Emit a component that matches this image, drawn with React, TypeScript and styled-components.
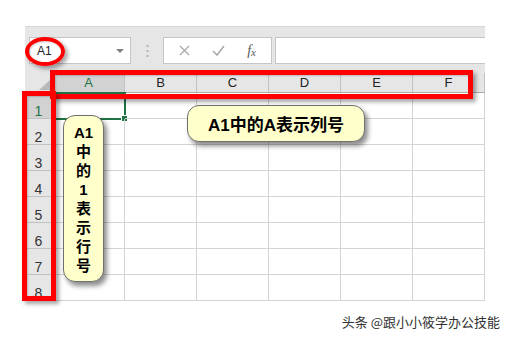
import React from "react";
import styled, {createGlobalStyle} from "styled-components";

const GlobalStyle = createGlobalStyle`
    html, body{
        margin: 0;
        padding: 0;
        background: #fff;
    }
    body{
        font-family: "Liberation Sans", "Noto Sans CJK SC", sans-serif;
    }
`

const Stage = styled.div`
    position: relative;
    width: 511px;
    height: 345px;
    overflow: hidden;
    box-sizing: border-box;
    padding: 26px 0 0 25px;
`

const Sheet = styled.div`
    width: 460px;
    background: #e6e6e6;
    border-top: 1px solid #d6d6d6;
`

const FormulaBar = styled.div`
    height: 37px;
    box-sizing: border-box;
    padding: 10px 0 0 4px;
    display: flex;
    align-items: stretch;
`

const NameBox = styled.div`
    width: 102px;
    box-sizing: border-box;
    background: #fff;
    border: 1px solid #c6c6c6;
    display: flex;
    align-items: center;
    justify-content: space-between;
    padding: 0 6px 0 7px;
    font-size: 12px;
    color: #222;
`

const Caret = styled.span`
    width: 0;
    height: 0;
    border-left: 4px solid transparent;
    border-right: 4px solid transparent;
    border-top: 4px solid #808080;
`

const Grip = styled.div`
    width: 32px;
    display: flex;
    align-items: center;
    justify-content: center;
`

const ActionBox = styled.div`
    width: 109px;
    box-sizing: border-box;
    background: #fff;
    border: 1px solid #c6c6c6;
    display: flex;
    align-items: center;
    justify-content: space-around;
    padding: 0 4px;
`

const Fx = styled.span`
    font-family: "Liberation Serif", serif;
    font-style: italic;
    font-size: 14px;
    color: #555;
    sub{
        font-size: 11px;
        vertical-align: -1px;
    }
`

const FormulaInput = styled.div`
    flex: 1;
    margin-left: 3px;
    background: #fff;
    border: 1px solid #c6c6c6;
    border-right: none;
`

const Gap = styled.div`
    height: 9px;
`

const Grid = styled.div`
    display: grid;
    grid-template-columns: 28px repeat(6, 72px);
    grid-template-rows: 20px repeat(8, 26px);
    background: #fff;
`

const Cell = styled.div`
    position: relative;
    box-sizing: border-box;
    border-right: 1px solid #d4d4d4;
    border-bottom: 1px solid #d4d4d4;
`

const ColHead = styled.div<{$active?: boolean}>`
    box-sizing: border-box;
    background: ${p => p.$active ? "#d2d2d2" : "#e6e6e6"};
    border-right: 1px solid #c2c2c2;
    border-bottom: 1px solid #ababab;
    display: flex;
    align-items: center;
    justify-content: center;
    font-size: 13px;
    color: ${p => p.$active ? "#217346" : "#222"};
`

const RowHead = styled.div<{$active?: boolean}>`
    box-sizing: border-box;
    background: ${p => p.$active ? "#d2d2d2" : "#e6e6e6"};
    border-right: 1px solid #ababab;
    border-bottom: 1px solid #c2c2c2;
    display: flex;
    align-items: flex-end;
    justify-content: center;
    font-size: 14px;
    line-height: 14px;
    color: ${p => p.$active ? "#217346" : "#333"};
`

const Corner = styled.div`
    box-sizing: border-box;
    background: #e6e6e6;
    border-right: 1px solid #ababab;
    border-bottom: 1px solid #ababab;
    svg{
        display: block;
    }
`

const Selection = styled.div`
    position: absolute;
    left: -1px;
    top: -1px;
    right: -2px;
    bottom: -2px;
    border: 2px solid #217346;
    .handle{
        position: absolute;
        right: -4px;
        bottom: -4px;
        width: 5px;
        height: 5px;
        background: #217346;
        border: 1px solid #fff;
    }
`

const Footer = styled.div`
    width: 475px;
    margin-top: 13px;
    text-align: right;
    font-family: "Noto Sans CJK SC", sans-serif;
    font-size: 13px;
    line-height: 16px;
    color: #333;
`

const RedFrame = styled.div`
    position: absolute;
    box-sizing: border-box;
    border: 5px solid #ff0000;
    box-shadow: 3px 3px 4px rgba(0,0,0,0.35), inset 1px 1px 2px rgba(0,0,0,0.2);
`

const RedOval = styled(RedFrame)`
    border-width: 4px;
    border-radius: 50%;
`

const Callout = styled.div`
    position: absolute;
    box-sizing: border-box;
    background: #ffffcc;
    border: 1px solid #6f6f6f;
    border-radius: 12px;
    box-shadow: 3px 4px 5px rgba(0,0,0,0.45);
    font-family: "Liberation Sans", "Noto Sans CJK SC", sans-serif;
    font-weight: 700;
    color: #000;
    display: flex;
    align-items: center;
    justify-content: center;
    text-align: center;
`

const WideCallout = styled(Callout)`
    font-size: 17px;
`

const TallCallout = styled(Callout)`
    flex-direction: column;
    font-size: 15px;
    line-height: 19px;
`

const cols = ["A", "B", "C", "D", "E", "F"];
const rows = [1, 2, 3, 4, 5, 6, 7, 8];

const App = () => {
    return (
        <Stage>
            <GlobalStyle/>
            <Sheet>
                <FormulaBar>
                    <NameBox>
                        <span>A1</span>
                        <Caret/>
                    </NameBox>
                    <Grip>
                        <svg width="3" height="12" viewBox="0 0 3 12">
                            <rect x="0.5" y="0" width="2" height="2" fill="#b4b4b4"/>
                            <rect x="0.5" y="5" width="2" height="2" fill="#b4b4b4"/>
                            <rect x="0.5" y="10" width="2" height="2" fill="#b4b4b4"/>
                        </svg>
                    </Grip>
                    <ActionBox>
                        <svg width="11" height="11" viewBox="0 0 11 11">
                            <path d="M1 1 L10 10 M10 1 L1 10" stroke="#ababab" strokeWidth="1.4" fill="none"/>
                        </svg>
                        <svg width="13" height="11" viewBox="0 0 13 11">
                            <path d="M1 6 L5 10 L12 1" stroke="#ababab" strokeWidth="1.6" fill="none"/>
                        </svg>
                        <Fx>f<sub>x</sub></Fx>
                    </ActionBox>
                    <FormulaInput/>
                </FormulaBar>
                <Gap/>
                <Grid>
                    <Corner>
                        <svg width="27" height="19" viewBox="0 0 27 19">
                            <polygon points="25,7 25,17 14,17" fill="#b9b9b9"/>
                        </svg>
                    </Corner>
                    {cols.map(c => (
                        <ColHead key={c} $active={c === "A"}>{c}</ColHead>
                    ))}
                    {rows.map(r => (
                        <React.Fragment key={r}>
                            <RowHead $active={r === 1}>{r}</RowHead>
                            {cols.map(c => (
                                <Cell key={c}>
                                    {r === 1 && c === "A" && (
                                        <Selection><span className="handle"/></Selection>
                                    )}
                                </Cell>
                            ))}
                        </React.Fragment>
                    ))}
                </Grid>
            </Sheet>
            <Footer>头条 @跟小小筱学办公技能</Footer>

            <RedFrame style={{left: 50, top: 70, width: 423, height: 29}}/>
            <RedFrame style={{left: 22, top: 91, width: 34, height: 210}}/>
            <RedOval style={{left: 25, top: 37, width: 40, height: 29}}/>

            <WideCallout style={{left: 187, top: 105, width: 178, height: 37}}>
                A1中的A表示列号
            </WideCallout>
            <TallCallout style={{left: 63, top: 115, width: 41, height: 167}}>
                <span>A1</span>
                <span>中</span>
                <span>的</span>
                <span>1</span>
                <span>表</span>
                <span>示</span>
                <span>行</span>
                <span>号</span>
            </TallCallout>
        </Stage>
    )
}

export default App;
